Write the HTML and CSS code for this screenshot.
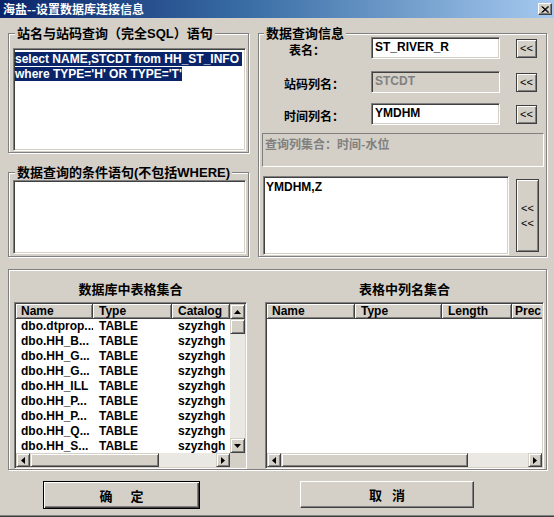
FILE: index.html
```html
<!DOCTYPE html>
<html>
<head>
<meta charset="utf-8">
<title>海盐--设置数据库连接信息</title>
<link rel="stylesheet" href="styles.css">
</head>
<body>
<div class="win">
  <div class="titlebar">
    <span class="title">海盐--设置数据库连接信息</span>
    <span class="close"><svg width="8" height="7" viewBox="0 0 8 7"><path d="M0.5 0.5L7 6.5M1.5 0.5L8 6.5M7 0.5L0.5 6.5M8 0.5L1.5 6.5" stroke="#000" stroke-width="1"/></svg></span>
  </div>
  <div class="client">
    <div class="top">
      <div class="leftcol">
        <div class="grp g1">
          <span class="glabel">站名与站码查询（完全SQL）语句</span>
          <div class="edit sql"><span class="sel">select NAME,STCDT from HH_ST_INFO </span><br><span class="sel">where TYPE='H' OR TYPE='T'</span></div>
        </div>
        <div class="grp g2">
          <span class="glabel">数据查询的条件语句(不包括WHERE)</span>
          <div class="edit cond"></div>
        </div>
      </div>
      <div class="grp g3">
        <span class="glabel gl3">数据查询信息</span>
        <div class="frow r1"><span class="lbl l1">表名：</span><div class="edit field">ST_RIVER_R</div><span class="btn small">&lt;&lt;</span></div>
        <div class="frow r2"><span class="lbl">站码列名：</span><div class="edit field disabled">STCDT</div><span class="btn small">&lt;&lt;</span></div>
        <div class="frow r3"><span class="lbl">时间列名：</span><div class="edit field">YMDHM</div><span class="btn small">&lt;&lt;</span></div>
        <div class="panel">查询列集合：时间-水位</div>
        <div class="lower">
          <div class="edit res">YMDHM,Z</div>
          <span class="btn dbl">&lt;&lt;<br>&lt;&lt;</span>
        </div>
      </div>
    </div>

    <div class="grp gb">
      <div class="pane pl">
        <div class="phead">数据库中表格集合</div>
        <div class="list">
          <div class="data">
            <div class="hrow cols-l"><span>Name</span><span>Type</span><span>Catalog</span></div>
            <div class="row cols-l"><span>dbo.dtprop...</span><span>TABLE</span><span>szyzhgh</span></div>
            <div class="row cols-l"><span>dbo.HH_B...</span><span>TABLE</span><span>szyzhgh</span></div>
            <div class="row cols-l"><span>dbo.HH_G...</span><span>TABLE</span><span>szyzhgh</span></div>
            <div class="row cols-l"><span>dbo.HH_G...</span><span>TABLE</span><span>szyzhgh</span></div>
            <div class="row cols-l"><span>dbo.HH_ILL</span><span>TABLE</span><span>szyzhgh</span></div>
            <div class="row cols-l"><span>dbo.HH_P...</span><span>TABLE</span><span>szyzhgh</span></div>
            <div class="row cols-l"><span>dbo.HH_P...</span><span>TABLE</span><span>szyzhgh</span></div>
            <div class="row cols-l"><span>dbo.HH_Q...</span><span>TABLE</span><span>szyzhgh</span></div>
            <div class="row cols-l"><span>dbo.HH_S...</span><span>TABLE</span><span>szyzhgh</span></div>
          </div>
          <div class="vscroll">
            <span class="sbtn"><svg width="7" height="4" viewBox="0 0 7 4"><path d="M3.5 0L7 4H0Z" fill="#000"/></svg></span>
            <span class="thumb vthumb"></span>
            <span class="track"></span>
            <span class="sbtn"><svg width="7" height="4" viewBox="0 0 7 4"><path d="M0 0H7L3.5 4Z" fill="#000"/></svg></span>
          </div>
          <div class="hscroll">
            <span class="sbtn h"><svg width="4" height="7" viewBox="0 0 4 7"><path d="M0 3.5L4 0V7Z" fill="#000"/></svg></span>
            <span class="thumb hthumb-l"></span>
            <span class="track"></span>
            <span class="sbtn h"><svg width="4" height="7" viewBox="0 0 4 7"><path d="M0 0L4 3.5L0 7Z" fill="#000"/></svg></span>
          </div>
          <div class="corner"></div>
        </div>
      </div>
      <div class="pane pr">
        <div class="phead">表格中列名集合</div>
        <div class="list lr">
          <div class="data">
            <div class="hrow cols-r"><span>Name</span><span>Type</span><span>Length</span><span class="prec">Prec</span></div>
          </div>
          <div class="hscroll">
            <span class="sbtn h"><svg width="4" height="7" viewBox="0 0 4 7"><path d="M0 3.5L4 0V7Z" fill="#000"/></svg></span>
            <span class="thumb hthumb-r"></span>
            <span class="track"></span>
            <span class="sbtn h"><svg width="4" height="7" viewBox="0 0 4 7"><path d="M0 0L4 3.5L0 7Z" fill="#000"/></svg></span>
          </div>
        </div>
      </div>
    </div>

    <div class="btns">
      <span class="pbtn ok">确<span class="sp1"></span>定</span>
      <span class="pbtn cancel">取<span class="sp2"></span>消</span>
    </div>
  </div>
</div>
</body>
</html>
```

FILE: styles.css
```css
* { box-sizing: border-box; }

body {
  margin: 0;
  background: #d4d0c8;
  font-family: "Liberation Sans", Arial, "Noto Sans CJK SC", sans-serif;
  font-size: 12px;
  color: #000;
}

.win {
  width: 554px;
  height: 517px;
  background: #d4d0c8;
  overflow: hidden;
  border-bottom: 1px solid #404040;
  box-shadow: inset 0 -1px 0 #808080;
}

.titlebar {
  height: 18px;
  display: flex;
  align-items: center;
  justify-content: space-between;
  padding: 0 2px 0 3px;
  background: linear-gradient(90deg, #0a246a 0%, #3a6ea5 45%, #a6caf0 100%);
}

.title {
  color: #fff;
  font: bold 12px "Noto Sans CJK SC", sans-serif;
  line-height: 18px;
}

.close {
  width: 14px;
  height: 12px;
  background: #d4d0c8;
  border: 1px solid;
  border-color: #fff #404040 #404040 #fff;
  box-shadow: inset -1px -1px 0 #808080;
  display: flex;
  align-items: center;
  justify-content: center;
}

.client {
  padding-left: 8px;
}

.top {
  display: flex;
  margin-top: 15px;
}

.leftcol {
  width: 241px;
  display: flex;
  flex-direction: column;
}

.grp {
  position: relative;
  border: 1px solid #808080;
  box-shadow: inset 1px 1px 0 #fff, 1px 1px 0 #fff;
}

.glabel {
  position: absolute;
  top: -8px;
  left: 6px;
  padding: 0 2px;
  background: #d4d0c8;
  font: bold 13px "Liberation Sans", "Noto Sans CJK SC", sans-serif;
  line-height: 15px;
  white-space: nowrap;
}

.gl3 { left: 5px; }

.edit {
  background: #fff;
  border: 1px solid;
  border-color: #808080 #fff #fff #808080;
  box-shadow: inset 1px 1px 0 #404040, inset -1px -1px 0 #d4d0c8;
  font-weight: bold;
  white-space: pre;
  overflow: hidden;
}

.g1 {
  height: 120px;
  padding: 14px 0 0 4px;
}

.sql {
  width: 233px;
  height: 103px;
  padding: 3px 0 0 1px;
  line-height: 15px;
}

.sel {
  background: #0a246a;
  color: #fff;
}

.g2 {
  margin-top: 19px;
  height: 85px;
  padding: 7px 0 0 4px;
}

.cond {
  width: 233px;
  height: 74px;
}

.g3 {
  margin-left: 9px;
  width: 289px;
  height: 224px;
}

.frow {
  display: flex;
  align-items: center;
  height: 22px;
}

.r1 { margin-top: 3px; }
.r2 { margin-top: 12px; }
.r3 { margin-top: 10px; }

.lbl {
  width: 112px;
  padding-left: 25px;
  font: bold 12px "Noto Sans CJK SC", sans-serif;
  line-height: 16px;
  padding-top: 3px;
}

.l1 { padding-left: 30px; }

.field {
  width: 129px;
  height: 22px;
  padding: 2px 3px;
  line-height: 15px;
}

.field.disabled {
  background: #d4d0c8;
  color: #808080;
}

.btn {
  background: #d4d0c8;
  border: 1px solid #404040;
  box-shadow: inset 1px 1px 0 #fff, inset -1px -1px 0 #808080;
  display: flex;
  align-items: center;
  justify-content: center;
  text-align: center;
  font-size: 11px;
  line-height: 14px;
}

.btn.small {
  margin-left: 16px;
  width: 21px;
  height: 19px;
}

.panel {
  margin: 8px 0 0 3px;
  width: 282px;
  height: 34px;
  border: 1px solid;
  border-color: #808080 #fff #fff #808080;
  padding: 2px 0 0 2px;
  color: #808080;
  font: bold 12px "Noto Sans CJK SC", sans-serif;
  line-height: 15px;
}

.lower {
  display: flex;
  align-items: center;
  margin: 9px 0 0 4px;
}

.res {
  width: 246px;
  height: 79px;
  padding: 3px 2px;
  line-height: 15px;
}

.btn.dbl {
  margin-left: 7px;
  width: 23px;
  height: 73px;
  line-height: 15px;
}

.gb {
  margin-top: 12px;
  width: 539px;
  height: 201px;
  display: flex;
  padding-left: 5px;
}

.pane {
  display: flex;
  flex-direction: column;
}

.pl { width: 233px; }
.pr { width: 279px; margin-left: 18px; }

.phead {
  height: 32px;
  padding-top: 9px;
  line-height: 16px;
  text-align: center;
  font: bold 13px "Noto Sans CJK SC", sans-serif;
}

.list {
  height: 167px;
  border: 1px solid;
  border-color: #808080 #fff #fff #808080;
  padding: 1px;
  box-shadow: inset 1px 1px 0 #404040, inset -1px -1px 0 #d4d0c8;
  display: grid;
  grid-template-columns: 1fr 15px;
  grid-template-rows: 1fr 14px;
}

.list.lr {
  grid-template-columns: 1fr;
}

.data {
  background: #fff;
  overflow: hidden;
}

.hrow, .row {
  display: grid;
  height: 15px;
  font-weight: bold;
  white-space: nowrap;
}

.cols-l { grid-template-columns: 77px 79px 58px; }
.cols-r { grid-template-columns: 88px 87px 70px 40px; }

.hrow span {
  background: #d4d0c8;
  border-right: 1px solid #404040;
  border-bottom: 1px solid #404040;
  box-shadow: inset 1px 1px 0 #fff, inset -1px -1px 0 #808080;
  padding-left: 6px;
  line-height: 14px;
  overflow: hidden;
}

.hrow span:first-child { padding-left: 5px; }
.hrow .prec { padding-left: 3px; border-right: none; }

.row span {
  padding-left: 6px;
  line-height: 15px;
  overflow: hidden;
}

.row span:first-child { padding-left: 5px; }

.vscroll {
  display: flex;
  flex-direction: column;
}

.hscroll {
  display: flex;
}

.sbtn, .thumb {
  background: #d4d0c8;
  border: 1px solid;
  border-color: #d4d0c8 #404040 #404040 #d4d0c8;
  box-shadow: inset 1px 1px 0 #fff, inset -1px -1px 0 #808080;
}

.sbtn {
  width: 15px;
  height: 15px;
  display: flex;
  align-items: center;
  justify-content: center;
  flex: none;
}

.sbtn.h {
  width: 14px;
  height: 14px;
}

.vthumb { height: 15px; flex: none; }
.hthumb-l { width: 129px; flex: none; }
.hthumb-r { width: 187px; flex: none; }

.track {
  flex: 1;
  background: #eae8e3;
}

.corner { background: #d4d0c8; }

.btns {
  display: flex;
  margin-top: 11px;
  padding-left: 35px;
}

.pbtn {
  display: flex;
  align-items: center;
  justify-content: center;
  font: bold 13px "Noto Sans CJK SC", sans-serif;
  background: #d4d0c8;
}

.ok {
  width: 157px;
  height: 28px;
  border: 1px solid #000;
  box-shadow: inset 1px 1px 0 #fff, inset -1px -1px 0 #404040, inset -2px -2px 0 #808080;
}

.cancel {
  margin-left: 100px;
  width: 174px;
  height: 27px;
  border: 1px solid;
  border-color: #fff #404040 #404040 #fff;
  box-shadow: inset -1px -1px 0 #808080;
}

.sp1 { display: inline-block; width: 18px; }
.sp2 { display: inline-block; width: 10px; }
```
